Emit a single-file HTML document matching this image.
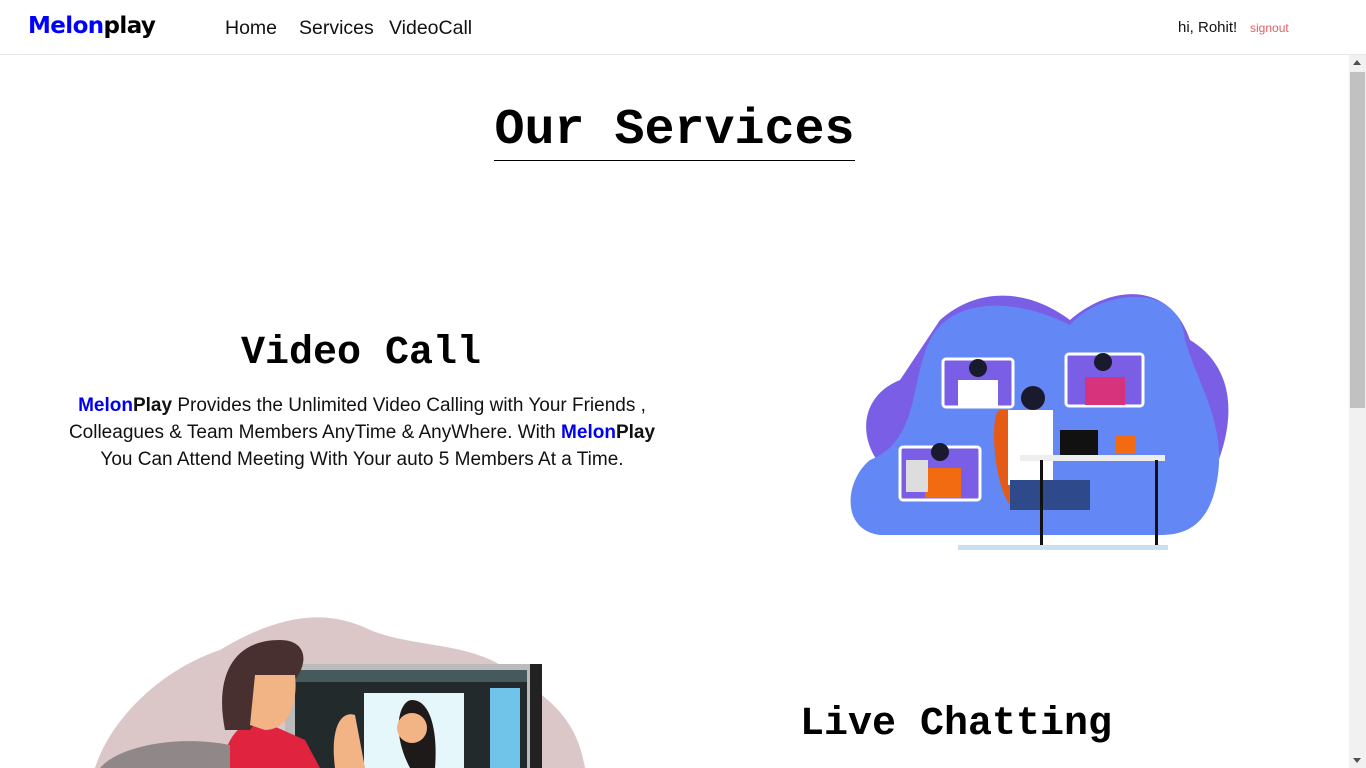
<!DOCTYPE html>
<html><head><meta charset="utf-8"><style>
*{margin:0;padding:0;box-sizing:border-box}
body{width:1366px;height:768px;overflow:hidden;background:#fff;font-family:"Liberation Sans",sans-serif;position:relative}
.hdr{position:absolute;left:0;top:0;width:1366px;height:55px;border-bottom:1px solid #e8e8e8;background:#fff}
.logo{position:absolute;left:28px;top:13px;font-size:23px;font-weight:bold;letter-spacing:-0.6px;font-family:"DejaVu Sans",sans-serif}
.nav{position:absolute;top:17px;font-size:19.5px;color:#111}
.sb{position:absolute;right:0;top:55px;width:17px;height:713px;background:#f1f1f1}
.thumb{position:absolute;left:1px;top:17px;width:15px;height:336px;background:#c1c1c1}
h1{position:absolute;left:494px;top:106px;width:361px;font-family:"Liberation Mono",monospace;font-weight:bold;font-size:50px;text-align:center;border-bottom:1.5px solid #000;height:55px;line-height:50px;white-space:nowrap}
h2{position:absolute;font-family:"Liberation Mono",monospace;font-weight:bold;font-size:40px;white-space:nowrap}
.p{position:absolute;left:40px;top:392px;width:644px;text-align:center;line-height:27px;color:#111;font-size:19px}
.b{color:#0000ee;font-weight:bold}
</style></head><body>
<div class="hdr">
<div class="logo"><span style="color:#0000ff">Melon</span><span>play</span></div>
<div class="nav" style="left:225px">Home</div>
<div class="nav" style="left:299px">Services</div>
<div class="nav" style="left:389px">VideoCall</div>
<div class="nav" style="left:1178px;top:19px;font-size:15px">hi, Rohit!</div>
<div class="nav" style="left:1250px;top:21px;font-size:12px;color:#e06060">signout</div>
</div>
<div class="sb"><div class="thumb"></div>
<div style="position:absolute;left:4px;top:5px;border:4px solid transparent;border-bottom:5px solid #505050;border-top:0"></div>
<div style="position:absolute;left:4px;bottom:5px;border:4px solid transparent;border-top:5px solid #505050;border-bottom:0"></div></div>
<h1>Our Services</h1>
<h2 style="left:241px;top:331px">Video Call</h2>
<div class="p"><span class="b">Melon</span><b>Play</b> Provides the Unlimited Video Calling with Your Friends ,<br>Colleagues &amp; Team Members AnyTime &amp; AnyWhere. With <span class="b">Melon</span><b>Play</b><br>You Can Attend Meeting With Your auto 5 Members At a Time.</div>
<h2 style="left:800px;top:702px">Live Chatting</h2>
<svg style="position:absolute;left:840px;top:280px" width="400" height="280" viewBox="0 0 400 280">
<path d="M100 40 C140 5 190 10 230 40 C270 5 330 0 350 60 C400 90 395 150 370 200 L60 200 C20 180 10 120 60 100 Z" fill="#7a5fe6"/>
<path d="M90 60 C110 20 170 15 230 45 C260 10 340 0 345 60 C360 110 390 150 375 210 C365 250 340 255 320 255 L40 255 C0 250 5 200 30 180 C80 160 70 100 90 60Z" fill="#6388f5"/>
<rect x="103" y="79" width="70" height="48" rx="3" fill="#7a5fe6" stroke="#fff" stroke-width="3"/>
<rect x="226" y="74" width="77" height="52" rx="3" fill="#7a5fe6" stroke="#fff" stroke-width="3"/>
<rect x="60" y="167" width="80" height="53" rx="3" fill="#7a5fe6" stroke="#fff" stroke-width="3"/>
<rect x="118" y="100" width="40" height="27" fill="#fff"/><circle cx="138" cy="88" r="9" fill="#1a1a2e"/>
<rect x="245" y="97" width="40" height="28" fill="#d6337c"/><circle cx="263" cy="82" r="9" fill="#1a1a2e"/>
<rect x="85" y="188" width="36" height="30" fill="#f36b10"/><circle cx="100" cy="172" r="9" fill="#1a1a2e"/>
<rect x="66" y="180" width="22" height="32" fill="#ddd"/>
<path d="M160 130 C150 130 152 200 170 225 L210 225 L210 130Z" fill="#e55a15"/>
<rect x="168" y="130" width="45" height="75" fill="#fff"/><circle cx="193" cy="118" r="12" fill="#1a1a2e"/>
<rect x="170" y="200" width="80" height="30" fill="#2f4a8a"/><rect x="220" y="150" width="38" height="25" fill="#111"/>
<rect x="180" y="175" width="145" height="6" fill="#eee"/>
<rect x="200" y="180" width="3" height="88" fill="#111"/><rect x="315" y="180" width="3" height="88" fill="#111"/>
<rect x="275" y="155" width="20" height="18" fill="#f36b10"/>
<rect x="118" y="265" width="210" height="5" fill="#c8e0f0"/>
</svg>
<svg style="position:absolute;left:80px;top:600px" width="520" height="168" viewBox="0 0 520 168">
<path d="M15 168 C30 120 80 70 140 50 C190 20 240 5 290 30 C340 50 400 40 440 80 C490 110 500 140 505 168Z" fill="#dbc6c8"/>
<rect x="205" y="64" width="256" height="104" fill="#bbb"/><rect x="450" y="64" width="12" height="104" fill="#222"/>
<rect x="215" y="70" width="232" height="98" fill="#232a2c"/><rect x="215" y="70" width="232" height="12" fill="#465a5e"/>
<rect x="284" y="93" width="100" height="75" fill="#e5f7fb"/>
<rect x="410" y="88" width="30" height="80" fill="#70c4ea"/>
<path d="M330 168 C310 130 320 100 332 100 C350 100 358 130 355 168Z" fill="#1f1a1a"/><circle cx="332" cy="128" r="15" fill="#f2b385"/>
<path d="M140 168 C150 130 160 125 180 120 L225 140 L240 168Z" fill="#e0233f"/>
<path d="M20 168 C40 145 100 135 150 145 L150 168Z" fill="#908888"/>
<path d="M145 130 C135 80 150 40 200 40 C225 40 230 60 215 80 L195 95 L170 130Z" fill="#47302f"/>
<path d="M175 75 L215 75 C218 100 210 130 185 130 L170 125Z" fill="#f2b385"/>
<path d="M255 168 C250 130 260 110 275 115 L285 168Z" fill="#f2b385"/>
</svg>
</body></html>
